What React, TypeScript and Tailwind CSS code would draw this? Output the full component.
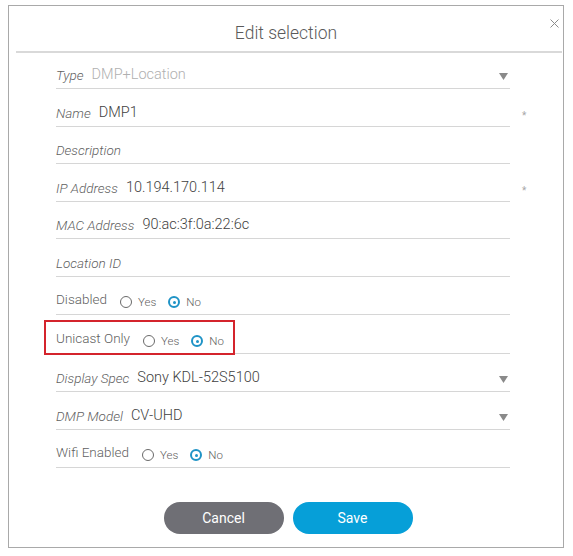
import React from "react";

const font = { fontFamily: "Roboto, 'Liberation Sans', sans-serif" };

function Caret() {
  return (
    <svg width="9" height="7" viewBox="0 0 9 7" className="ml-auto mr-[2px] mb-[3px]">
      <path d="M0 0 H9 L4.5 7 Z" fill="#8a8a8a" />
    </svg>
  );
}

function TextRow({
  label,
  value,
  h,
  caret,
  req,
  muted,
}: {
  label: string;
  value?: string;
  h: string;
  caret?: boolean;
  req?: boolean;
  muted?: boolean;
}) {
  return (
    <div className="flex items-end">
      <div className={`w-[454px] ${h} border-b border-[#d6d6d6] flex items-end pb-[5px]`}>
        <span className="italic font-light text-[13.5px] leading-[16px] text-[#5f5f5f]">{label}</span>
        {value && (
          <span
            className={`ml-[8px] font-light text-[14.5px] leading-[16px] ${muted ? "text-[#b0b0b0]" : "text-[#3f3f3f]"}`}
          >
            {value}
          </span>
        )}
        {caret && <Caret />}
      </div>
      {req && <span className="ml-[12px] mb-[6px] text-[10px] leading-[10px] text-[#a8a8a8]">*</span>}
    </div>
  );
}

function Radio({ on }: { on?: boolean }) {
  return on ? (
    <span className="w-[12px] h-[12px] rounded-full border-2 border-[#1f93c6] flex items-center justify-center">
      <span className="w-[3px] h-[3px] rounded-full bg-[#1f93c6]" />
    </span>
  ) : (
    <span className="w-[12px] h-[12px] rounded-full border border-[#6a6a6a]" />
  );
}

function RadioRow({ label, h, box }: { label: string; h: string; box?: boolean }) {
  return (
    <div className={`relative w-[454px] ${h} border-b border-[#d6d6d6] flex items-end`}>
      <span className="mb-[7px] font-light text-[13.5px] leading-[16px] text-[#5f5f5f]">{label}</span>
      <div className="mb-[6px] ml-[13px] flex items-center h-[12px]">
        <Radio />
        <span className="ml-[6px] font-light text-[11.5px] leading-[12px] text-[#5f5f5f]">Yes</span>
        <span className="ml-[12px]">
          <Radio on />
        </span>
        <span className="ml-[6px] font-light text-[11.5px] leading-[12px] text-[#5f5f5f]">No</span>
      </div>
      {box && (
        <div className="absolute left-[-12px] top-[5px] w-[191px] h-[35px] border-2 border-[#d4242c]" />
      )}
    </div>
  );
}

export default function App() {
  return (
    <div className="w-[573px] h-[556px] bg-white pt-[5px] pl-[8px]" style={font}>
      <div className="w-[556px] h-[543px] border border-[#a9a9a9] bg-white">
        <div className="relative h-[45px] pt-[15px] text-center">
          <span className="text-[17.5px] leading-[24px] font-light text-[#5a5a5a]">Edit selection</span>
          <svg width="9" height="9" viewBox="0 0 9 9" className="absolute right-[4px] top-[13px]">
            <path d="M0.5 0.5 L8.5 8.5 M8.5 0.5 L0.5 8.5" stroke="#8c8c8c" strokeWidth="1" />
          </svg>
        </div>
        <div className="ml-[7px] mr-[1px] h-[2px] bg-[#d9d9d9]" />
        <div className="pl-[47px]">
          <TextRow label="Type" value="DMP+Location" h="h-[36px]" caret muted />
          <TextRow label="Name" value="DMP1" h="h-[38px]" req />
          <TextRow label="Description" h="h-[37px]" />
          <TextRow label="IP Address" value="10.194.170.114" h="h-[38px]" req />
          <TextRow label="MAC Address" value="90:ac:3f:0a:22:6c" h="h-[37px]" />
          <TextRow label="Location ID" h="h-[38px]" />
          <RadioRow label="Disabled" h="h-[38px]" />
          <RadioRow label="Unicast Only" h="h-[39px]" box />
          <TextRow label="Display Spec" value="Sony KDL-52S5100" h="h-[38px]" caret />
          <TextRow label="DMP Model" value="CV-UHD" h="h-[38px]" caret />
          <RadioRow label="Wifi Enabled" h="h-[38px]" />
        </div>
        <div className="mt-[34px] flex justify-center pl-[4px] gap-[9px]">
          <button className="w-[120px] h-[32px] rounded-full bg-[#6f6f75] text-white text-[14px]">Cancel</button>
          <button className="w-[120px] h-[32px] rounded-full bg-[#069fd8] text-white text-[14px]">Save</button>
        </div>
      </div>
    </div>
  );
}
